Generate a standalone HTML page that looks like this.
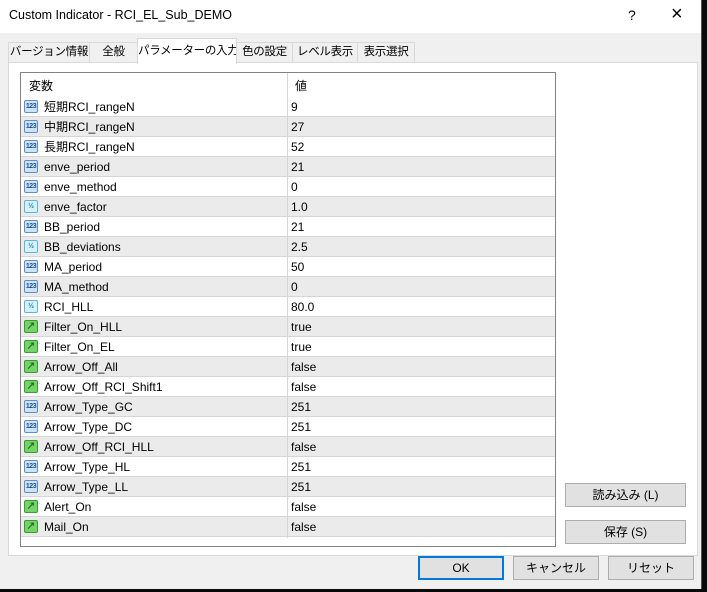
<!DOCTYPE html><html><head><meta charset="utf-8"><style>
body{margin:0;width:707px;height:592px;background:#0a0a0a;position:relative;overflow:hidden;font-family:"Liberation Sans","Noto Sans CJK JP",sans-serif;font-size:12px;color:#000}
.dlg{position:absolute;left:0;top:0;width:701px;height:589px;background:#f0f0f0;border-right:1px solid #555}
.title{position:absolute;left:0;top:0;width:701px;height:33px;background:#fff}
.title span{position:absolute;left:9px;top:8px;font-size:12.5px}
.tab{position:absolute;top:42px;height:20px;border:1px solid #d9d9d9;border-bottom:none;background:#f0f0f0;text-align:center;line-height:19px;font-size:11.5px;white-space:nowrap;overflow:hidden;letter-spacing:-0.3px}
.tab.a{top:38px;height:25px;background:#fff;z-index:2;line-height:24px}
.panel{position:absolute;left:8px;top:62px;width:688px;height:492px;background:#fff;border:1px solid #d9d9d9}
.list{position:absolute;left:20px;top:72px;width:534px;height:473px;border:1px solid #828282;background:#fff;overflow:hidden}
.hdr{position:absolute;left:0;top:0;width:534px;height:24px;line-height:26px}
.row{position:absolute;left:0;width:534px;height:19px;border-bottom:1px solid #d6d6d6;line-height:20px}
.g{background:#ebebeb}
.c1{position:absolute;left:23px}
.c2{position:absolute;left:270px}
.vl{position:absolute;left:266px;top:0;width:1px;height:465px;background:#d6d6d6}
.ic{position:absolute;left:3px;top:3px;border-radius:2px;font-size:7px;text-align:center;font-weight:bold;overflow:hidden}
.i{background:#cfe3f7;border:1px solid #5b8fc7;width:12px;height:11px;line-height:11px;color:#1a4f8f;letter-spacing:-0.5px}
.d{background:#d6f1fb;border:1px solid #5fb4d8;width:12px;height:11px;line-height:11px;color:#1a7fb0}
.b{background:#74d46a;border:1px solid #3a9d33;width:12px;height:11px;color:#1d5b18;line-height:10px;font-size:9px}
.btn{position:absolute;height:22px;border:1px solid #adadad;background:#e1e1e1;text-align:center;line-height:22px;font-size:12px}
</style></head><body>
<div class="dlg">
<div class="title"><span>Custom Indicator - RCI_EL_Sub_DEMO</span><span style="left:628px;top:7px;font-size:14px">?</span><span style="left:671px;top:3px;font-size:20px;font-weight:300">×</span></div>
<div class="tab" style="left:8px;width:80px">バージョン情報</div>
<div class="tab" style="left:89px;width:47px">全般</div>
<div class="tab a" style="left:137px;width:98px">パラメーターの入力</div>
<div class="tab" style="left:236px;width:55px">色の設定</div>
<div class="tab" style="left:292px;width:64px">レベル表示</div>
<div class="tab" style="left:357px;width:56px">表示選択</div>
<div class="panel"></div>
<div class="list">
<div class="hdr"><span style="position:absolute;left:8px">変数</span><span style="position:absolute;left:274px">値</span></div>
<div id="rows"></div>
<div class="vl"></div>
</div>
<div class="btn" style="left:565px;top:483px;width:119px">読み込み (L)</div>
<div class="btn" style="left:565px;top:520px;width:119px">保存 (S)</div>
<div class="btn" style="left:418px;top:556px;width:82px;border:2px solid #0078d7;height:20px;line-height:20px">OK</div>
<div class="btn" style="left:513px;top:556px;width:84px">キャンセル</div>
<div class="btn" style="left:608px;top:556px;width:84px">リセット</div>
</div>
<script>
var d=[["短期RCI_rangeN","i","9"],["中期RCI_rangeN","i","27"],["長期RCI_rangeN","i","52"],["enve_period","i","21"],["enve_method","i","0"],["enve_factor","d","1.0"],["BB_period","i","21"],["BB_deviations","d","2.5"],["MA_period","i","50"],["MA_method","i","0"],["RCI_HLL","d","80.0"],["Filter_On_HLL","b","true"],["Filter_On_EL","b","true"],["Arrow_Off_All","b","false"],["Arrow_Off_RCI_Shift1","b","false"],["Arrow_Type_GC","i","251"],["Arrow_Type_DC","i","251"],["Arrow_Off_RCI_HLL","b","false"],["Arrow_Type_HL","i","251"],["Arrow_Type_LL","i","251"],["Alert_On","b","false"],["Mail_On","b","false"]];
var h="";d.forEach(function(r,k){var t=r[1]=="i"?"123":r[1]=="d"?"½":"↗";h+='<div class="row'+(k%2?' g':'')+'" style="top:'+(24+k*20)+'px"><div class="ic '+r[1]+'">'+t+'</div><span class="c1">'+r[0]+'</span><span class="c2">'+r[2]+'</span></div>';});
document.getElementById("rows").innerHTML=h;
</script>
</body></html>
